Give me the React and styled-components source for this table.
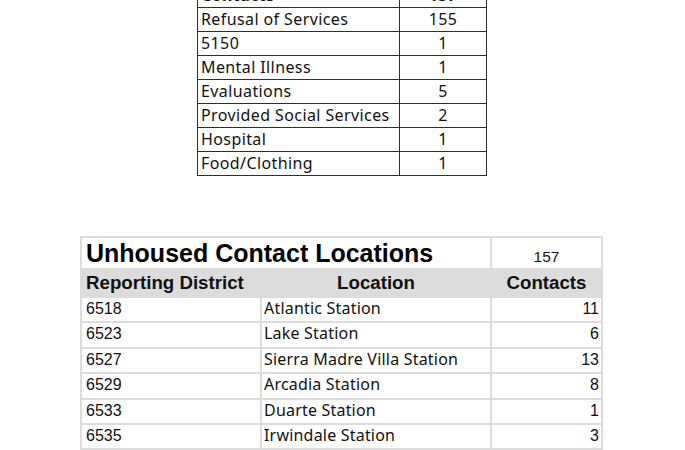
import React from "react";
import styled, { createGlobalStyle } from "styled-components";

const GlobalStyle = createGlobalStyle`
  body {
    margin: 0;
    background: #fff;
  }
`;

const Page = styled.div`
  display: flex;
  flex-direction: column;
  align-items: flex-start;
`;

// top summary table
const SummaryTable = styled.table`
  margin: -17px 0 0 197px;
  border-collapse: collapse;
  font-family: "Noto Sans", sans-serif;
  font-size: 16px;
  letter-spacing: 0.4px;
  color: #111;

  td {
    border: 1px solid #2e2e2e;
    height: 22px;
    padding: 0 3px 1px;
    white-space: nowrap;
  }
`;

const Label = styled.td`
  width: 195px;
  font-weight: ${p => (p.$bold ? 700 : 400)};
`;

const Count = styled.td`
  width: 80px;
  text-align: center;
  font-weight: ${p => (p.$bold ? 700 : 400)};
`;

// locations table
const LocTable = styled.table`
  margin: 60px 0 0 80px;
  border-collapse: collapse;
  width: 521px;
  table-layout: fixed;
  color: #111;

  td {
    border: 2px solid #dcdcdc;
    padding: 0;
    white-space: nowrap;
  }
`;

const TitleCell = styled.td`
  height: 30px;
  padding-left: 4px !important;
  font-family: "Liberation Sans", Arial, sans-serif;
  font-size: 25px;
  font-weight: 700;
  color: #000;
`;

const TotalCell = styled.td`
  vertical-align: bottom;
  text-align: center;
  font-family: "Liberation Sans", Arial, sans-serif;
  font-size: 15.5px;
  padding-bottom: 2px !important;
`;

const HeadRow = styled.tr`
  background: #dcdcdc;
`;

const HeadCell = styled.td`
  height: 26px;
  font-family: "Liberation Sans", Arial, sans-serif;
  font-size: 18.7px;
  font-weight: 700;
  text-align: ${p => p.$align || "left"};
  padding-left: ${p => (p.$align === "left" ? "4px" : "0")} !important;
`;

const Cell = styled.td`
  font-family: ${p =>
    p.$aptos ? '"Noto Sans", sans-serif' : '"Liberation Sans", Arial, sans-serif'};
  font-size: 16px;
  line-height: ${p => (p.$aptos ? "20.4px" : "21.4px")};
  letter-spacing: ${p => (p.$aptos ? "0.2px" : "0")};
  text-align: ${p => (p.$right ? "right" : "left")};
  padding: ${p => (p.$right ? "0 2px 2px 0" : p.$aptos ? "0 0 3px 2px" : "0 0 2px 4px")} !important;
`;

const summary = [
  ["Refusal of Services", 155],
  ["5150", 1],
  ["Mental Illness", 1],
  ["Evaluations", 5],
  ["Provided Social Services", 2],
  ["Hospital", 1],
  ["Food/Clothing", 1]
];

const locations = [
  ["6518", "Atlantic Station", 11],
  ["6523", "Lake Station", 6],
  ["6527", "Sierra Madre Villa Station", 13],
  ["6529", "Arcadia Station", 8],
  ["6533", "Duarte Station", 1],
  ["6535", "Irwindale Station", 3],
  ["", "\u00a0", ""]
];

export default function App() {
  return (
    <Page>
      <GlobalStyle />
      <SummaryTable>
        <tbody>
          <tr>
            <Label $bold>Contacts</Label>
            <Count $bold>157</Count>
          </tr>
          {summary.map(([name, n]) => (
            <tr key={name}>
              <Label>{name}</Label>
              <Count>{n}</Count>
            </tr>
          ))}
        </tbody>
      </SummaryTable>

      <LocTable>
        <colgroup>
          <col style={{ width: 180 }} />
          <col style={{ width: 230 }} />
          <col style={{ width: 111 }} />
        </colgroup>
        <tbody>
          <tr>
            <TitleCell colSpan={2}>Unhoused Contact Locations</TitleCell>
            <TotalCell>157</TotalCell>
          </tr>
          <HeadRow>
            <HeadCell $align="left">Reporting District</HeadCell>
            <HeadCell $align="center">Location</HeadCell>
            <HeadCell $align="center">Contacts</HeadCell>
          </HeadRow>
          {locations.map(([rd, loc, n], i) => (
            <tr key={i}>
              <Cell>{rd}</Cell>
              <Cell $aptos>{loc}</Cell>
              <Cell $right>{n}</Cell>
            </tr>
          ))}
        </tbody>
      </LocTable>
    </Page>
  );
}
